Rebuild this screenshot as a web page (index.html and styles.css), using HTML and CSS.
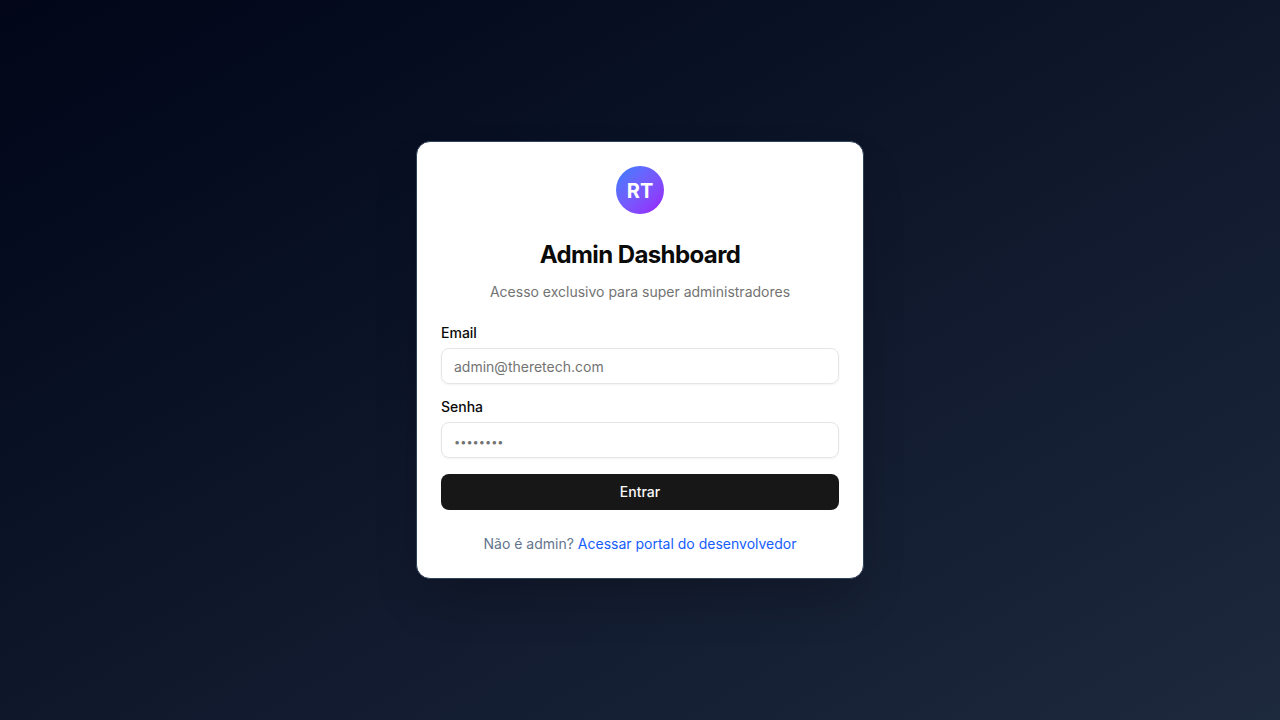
FILE: index.html
```html
<!DOCTYPE html>
<html lang="pt-BR">
<head>
<meta charset="utf-8">
<meta name="viewport" content="width=device-width, initial-scale=1">
<title>Admin Dashboard</title>
<link rel="stylesheet" href="styles.css">
</head>
<body>
<main class="page">
  <section class="card">
    <header class="card-header">
      <div class="logo">RT</div>
      <h1 class="title">Admin Dashboard</h1>
      <p class="description">Acesso exclusivo para super administradores</p>
    </header>
    <form class="form">
      <div class="field">
        <label class="label" for="email">Email</label>
        <input class="input" id="email" type="email" placeholder="admin@theretech.com">
      </div>
      <div class="field">
        <label class="label" for="password">Senha</label>
        <input class="input input-password" id="password" type="password" placeholder="••••••••">
      </div>
      <button class="submit" type="submit">Entrar</button>
    </form>
    <p class="footer">Não é admin? <a class="link" href="#">Acessar portal do desenvolvedor</a></p>
  </section>
</main>
</body>
</html>
```

FILE: styles.css
```css
* {
  box-sizing: border-box;
}

body {
  margin: 0;
  font-family: Inter, "Liberation Sans", sans-serif;
  font-size: 14px;
  line-height: 20px;
  color: #0a0a0a;
  -webkit-font-smoothing: antialiased;
}

.page {
  display: flex;
  align-items: center;
  justify-content: center;
  min-height: 100vh;
  padding: 16px;
  background: linear-gradient(to bottom right in oklab, #020618, #0f172b, #1d293d);
}

.card {
  width: 100%;
  max-width: 448px;
  padding: 24px;
  border: 1px solid #314158;
  border-radius: 14px;
  background: #fff;
  box-shadow: 0 25px 50px -12px rgb(0 0 0 / 25%);
}

.card-header {
  display: flex;
  flex-direction: column;
  align-items: center;
  text-align: center;
}

.logo {
  display: flex;
  align-items: center;
  justify-content: center;
  width: 48px;
  height: 48px;
  padding-top: 2px;
  margin-bottom: 25px;
  border-radius: 50%;
  background: linear-gradient(to bottom right in oklab, #2b7fff, #9810fa);
  color: #fff;
  font-size: 20px;
  font-weight: 700;
  line-height: 28px;
}

.title {
  margin: 0 0 11px;
  font-size: 24px;
  font-weight: 700;
  line-height: 32px;
  letter-spacing: -0.025em;
}

.description {
  margin: 0;
  color: #737373;
}

.form {
  display: flex;
  flex-direction: column;
  gap: 16px;
  margin-top: 24px;
}

.field {
  display: flex;
  flex-direction: column;
  gap: 8px;
}

.label {
  font-weight: 500;
  line-height: 14px;
}

.input {
  width: 100%;
  height: 36px;
  padding: 4px 12px;
  border: 1px solid #e5e5e5;
  border-radius: 8px;
  background: transparent;
  box-shadow: 0 1px 2px rgb(0 0 0 / 5%);
  color: inherit;
  font: inherit;
}

.input::placeholder {
  color: #737373;
}

.input-password::placeholder {
  font-size: 11px;
}

.submit {
  height: 36px;
  padding: 8px 16px;
  border: 0;
  border-radius: 8px;
  background: #171717;
  color: #fafafa;
  font: inherit;
  font-weight: 500;
  cursor: pointer;
}

.footer {
  margin: 24px 0 0;
  color: #62748e;
  text-align: center;
}

.link {
  color: #155dfc;
  text-decoration: none;
}

.link:hover {
  text-decoration: underline;
}
```
